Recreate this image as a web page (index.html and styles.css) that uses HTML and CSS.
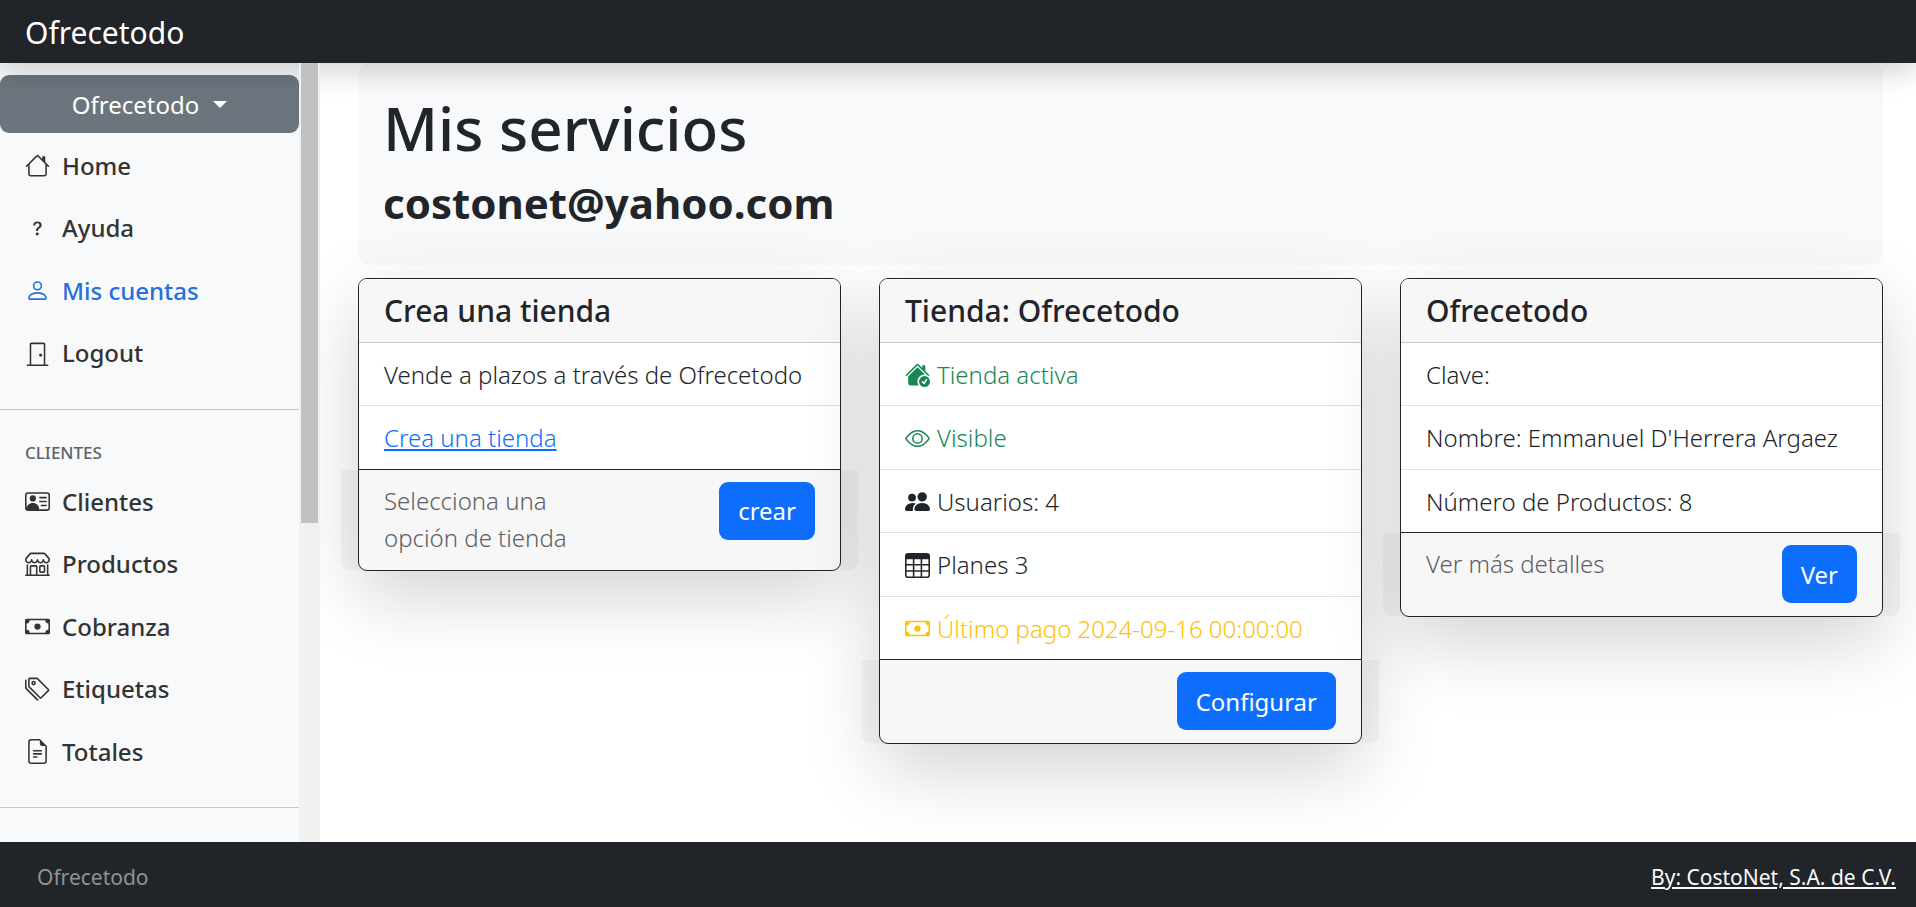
FILE: index.html
```html
<!DOCTYPE html>
<html lang="es">
<head>
    <meta charset="utf-8">
    <meta name="viewport" content="width=device-width, initial-scale=1">
    <title>Ofrecetodo</title>
    <link rel="stylesheet" href="styles.css">
</head>
<body>
    <header class="navbar">
        <a class="navbar-brand" href="#">Ofrecetodo</a>
    </header>

    <div class="layout">
        <aside class="sidebar">
            <nav class="sidebar-menu">
                <button class="btn btn-secondary dropdown-toggle" type="button">Ofrecetodo</button>
                <ul class="nav">
                    <li><a class="nav-link" href="#">
                        <svg class="icon" viewBox="0 0 16 16"><path d="M8.707 1.5a1 1 0 0 0-1.414 0L.646 8.146a.5.5 0 0 0 .708.708L2 8.207V13.5A1.5 1.5 0 0 0 3.5 15h9a1.5 1.5 0 0 0 1.5-1.5V8.207l.646.647a.5.5 0 0 0 .708-.708L13 5.793V2.5a.5.5 0 0 0-.5-.5h-1a.5.5 0 0 0-.5.5v1.293zM13 7.207V13.5a.5.5 0 0 1-.5.5h-9a.5.5 0 0 1-.5-.5V7.207l5-5z"/></svg>
                        Home</a></li>
                    <li><a class="nav-link" href="#">
                        <svg class="icon" viewBox="0 0 16 16"><path d="M5.255 5.786a.237.237 0 0 0 .241.247h.825c.138 0 .248-.113.266-.25.09-.656.54-1.134 1.342-1.134.686 0 1.314.343 1.314 1.168 0 .635-.374.927-.965 1.371-.673.489-1.206 1.06-1.168 1.987l.003.217a.25.25 0 0 0 .25.246h.811a.25.25 0 0 0 .25-.25v-.105c0-.718.273-.927 1.01-1.486.609-.463 1.244-.977 1.244-2.056 0-1.511-1.276-2.241-2.673-2.241-1.267 0-2.655.59-2.75 2.286m1.557 5.763c0 .533.425.927 1.01.927.609 0 1.028-.394 1.028-.927 0-.552-.42-.94-1.029-.94-.584 0-1.009.388-1.009.94"/></svg>
                        Ayuda</a></li>
                    <li><a class="nav-link active" href="#">
                        <svg class="icon" viewBox="0 0 16 16"><path d="M8 8a3 3 0 1 0 0-6 3 3 0 0 0 0 6m2-3a2 2 0 1 1-4 0 2 2 0 0 1 4 0m4 8c0 1-1 1-1 1H3s-1 0-1-1 1-4 6-4 6 3 6 4m-1-.004c-.001-.246-.154-.986-.832-1.664C11.516 10.68 10.289 10 8 10s-3.516.68-4.168 1.332c-.678.678-.83 1.418-.832 1.664z"/></svg>
                        Mis cuentas</a></li>
                    <li><a class="nav-link" href="#">
                        <svg class="icon" viewBox="0 0 16 16"><path d="M3 2a1 1 0 0 1 1-1h8a1 1 0 0 1 1 1v13h1.5a.5.5 0 0 1 0 1h-13a.5.5 0 0 1 0-1H3zm1 13h8V2H4z"/><path d="M9 9a1 1 0 1 0 2 0 1 1 0 0 0-2 0"/></svg>
                        Logout</a></li>
                </ul>
                <hr class="divider">
                <h6 class="sidebar-heading">Clientes</h6>
                <ul class="nav">
                    <li><a class="nav-link" href="#">
                        <svg class="icon" viewBox="0 0 16 16"><path d="M5 8a2 2 0 1 0 0-4 2 2 0 0 0 0 4m4-2.5a.5.5 0 0 1 .5-.5h4a.5.5 0 0 1 0 1h-4a.5.5 0 0 1-.5-.5M9 8a.5.5 0 0 1 .5-.5h4a.5.5 0 0 1 0 1h-4A.5.5 0 0 1 9 8m1 2.5a.5.5 0 0 1 .5-.5h3a.5.5 0 0 1 0 1h-3a.5.5 0 0 1-.5-.5"/><path d="M2 2a2 2 0 0 0-2 2v8a2 2 0 0 0 2 2h12a2 2 0 0 0 2-2V4a2 2 0 0 0-2-2zM1 4a1 1 0 0 1 1-1h12a1 1 0 0 1 1 1v8a1 1 0 0 1-1 1H8.96q.04-.245.04-.5C9 10.567 7.21 9 5 9c-2.086 0-3.8 1.398-3.984 3.181A1 1 0 0 1 1 12z"/></svg>
                        Clientes</a></li>
                    <li><a class="nav-link" href="#">
                        <svg class="icon" viewBox="0 0 16 16"><path d="M2.97 1.35A1 1 0 0 1 3.73 1h8.54a1 1 0 0 1 .76.35l2.609 3.044A1.5 1.5 0 0 1 16 5.37v.255a2.375 2.375 0 0 1-4.25 1.458A2.37 2.37 0 0 1 9.875 8 2.37 2.37 0 0 1 8 7.083 2.37 2.37 0 0 1 6.125 8a2.37 2.37 0 0 1-1.875-.917A2.375 2.375 0 0 1 0 5.625V5.37a1.5 1.5 0 0 1 .361-.976zm1.78 4.275a1.375 1.375 0 0 0 2.75 0 .5.5 0 0 1 1 0 1.375 1.375 0 0 0 2.75 0 .5.5 0 0 1 1 0 1.375 1.375 0 1 0 2.75 0V5.37a.5.5 0 0 0-.12-.325L12.27 2H3.73L1.12 5.045A.5.5 0 0 0 1 5.37v.255a1.375 1.375 0 0 0 2.75 0 .5.5 0 0 1 1 0M1.5 8.5A.5.5 0 0 1 2 9v6h1v-5a1 1 0 0 1 1-1h3a1 1 0 0 1 1 1v5h6V9a.5.5 0 0 1 1 0v6h.5a.5.5 0 0 1 0 1H.5a.5.5 0 0 1 0-1H1V9a.5.5 0 0 1 .5-.5M4 15h3v-5H4zm5-5a1 1 0 0 1 1-1h2a1 1 0 0 1 1 1v3a1 1 0 0 1-1 1h-2a1 1 0 0 1-1-1zm3 0h-2v3h2z"/></svg>
                        Productos</a></li>
                    <li><a class="nav-link" href="#">
                        <svg class="icon" viewBox="0 0 16 16"><path d="M8 10a2 2 0 1 0 0-4 2 2 0 0 0 0 4"/><path d="M0 4a1 1 0 0 1 1-1h14a1 1 0 0 1 1 1v8a1 1 0 0 1-1 1H1a1 1 0 0 1-1-1zm3 0a2 2 0 0 1-2 2v4a2 2 0 0 1 2 2h10a2 2 0 0 1 2-2V6a2 2 0 0 1-2-2z"/></svg>
                        Cobranza</a></li>
                    <li><a class="nav-link" href="#">
                        <svg class="icon" viewBox="0 0 16 16"><path d="M3 2v4.586l7 7L14.586 9l-7-7zM2 2a1 1 0 0 1 1-1h4.586a1 1 0 0 1 .707.293l7 7a1 1 0 0 1 0 1.414l-4.586 4.586a1 1 0 0 1-1.414 0l-7-7A1 1 0 0 1 2 6.586z"/><path d="M5.5 5a.5.5 0 1 1 0-1 .5.5 0 0 1 0 1m0 1a1.5 1.5 0 1 0 0-3 1.5 1.5 0 0 0 0 3M1 7.086a1 1 0 0 0 .293.707L8.75 15.25l-.043.043a1 1 0 0 1-1.414 0l-7-7A1 1 0 0 1 0 7.586V3a1 1 0 0 1 1-1z"/></svg>
                        Etiquetas</a></li>
                    <li><a class="nav-link" href="#">
                        <svg class="icon" viewBox="0 0 16 16"><path d="M5.5 7a.5.5 0 0 0 0 1h5a.5.5 0 0 0 0-1zM5 9.5a.5.5 0 0 1 .5-.5h5a.5.5 0 0 1 0 1h-5a.5.5 0 0 1-.5-.5m0 2a.5.5 0 0 1 .5-.5h2a.5.5 0 0 1 0 1h-2a.5.5 0 0 1-.5-.5"/><path d="M9.5 0H4a2 2 0 0 0-2 2v12a2 2 0 0 0 2 2h8a2 2 0 0 0 2-2V4.5zm0 1v2A1.5 1.5 0 0 0 11 4.5h2V14a1 1 0 0 1-1 1H4a1 1 0 0 1-1-1V2a1 1 0 0 1 1-1z"/></svg>
                        Totales</a></li>
                </ul>
                <hr class="divider">
            </nav>
            <div class="scrollbar"><div class="scrollbar-thumb"></div></div>
        </aside>

        <main class="content">
            <section class="jumbotron">
                <h1>Mis servicios</h1>
                <h2>costonet@yahoo.com</h2>
            </section>

            <div class="cards">
                <article class="card">
                    <h5 class="card-header">Crea una tienda</h5>
                    <ul class="list-group">
                        <li>Vende a plazos a través de Ofrecetodo</li>
                        <li><a href="#">Crea una tienda</a></li>
                    </ul>
                    <div class="card-footer">
                        <span class="text-muted">Selecciona una opción de tienda</span>
                        <button class="btn btn-primary" type="button">crear</button>
                    </div>
                </article>

                <article class="card">
                    <h5 class="card-header">Tienda: Ofrecetodo</h5>
                    <ul class="list-group">
                        <li class="text-success">
                            <svg class="icon" viewBox="0 0 16 16"><path d="M7.293 1.5a1 1 0 0 1 1.414 0L11 3.793V2.5a.5.5 0 0 1 .5-.5h1a.5.5 0 0 1 .5.5v3.293l2.354 2.353a.5.5 0 0 1-.708.708L8 2.207 1.354 8.854a.5.5 0 1 1-.708-.708z"/><path d="m8 3.293 4.712 4.712A4.5 4.5 0 0 0 8.758 15H3.5A1.5 1.5 0 0 1 2 13.5V9.293z"/><path d="M12.5 16a3.5 3.5 0 1 0 0-7 3.5 3.5 0 0 0 0 7m1.679-4.493-1.335 2.226a.75.75 0 0 1-1.174.144l-.774-.773a.5.5 0 0 1 .708-.707l.547.547 1.17-1.951a.5.5 0 1 1 .858.514"/></svg>
                            Tienda activa</li>
                        <li class="text-success">
                            <svg class="icon" viewBox="0 0 16 16"><path d="M16 8s-3-5.5-8-5.5S0 8 0 8s3 5.5 8 5.5S16 8 16 8M1.173 8a13 13 0 0 1 1.66-2.043C4.12 4.668 5.88 3.5 8 3.5s3.879 1.168 5.168 2.457A13 13 0 0 1 14.828 8q-.086.13-.195.288c-.335.48-.83 1.12-1.465 1.755C11.879 11.332 10.119 12.5 8 12.5s-3.879-1.168-5.168-2.457A13 13 0 0 1 1.172 8z"/><path d="M8 5.5a2.5 2.5 0 1 0 0 5 2.5 2.5 0 0 0 0-5M4.5 8a3.5 3.5 0 1 1 7 0 3.5 3.5 0 0 1-7 0"/></svg>
                            Visible</li>
                        <li>
                            <svg class="icon" viewBox="0 0 16 16"><path d="M7 14s-1 0-1-1 1-4 5-4 5 3 5 4-1 1-1 1zm4-6a3 3 0 1 0 0-6 3 3 0 0 0 0 6m-5.784 6A2.24 2.24 0 0 1 5 13c0-1.355.68-2.75 1.936-3.72A6.3 6.3 0 0 0 5 9c-4 0-5 3-5 4s1 1 1 1zM4.5 8a2.5 2.5 0 1 0 0-5 2.5 2.5 0 0 0 0 5"/></svg>
                            Usuarios: 4</li>
                        <li>
                            <svg class="icon" viewBox="0 0 16 16"><path d="M0 2a2 2 0 0 1 2-2h12a2 2 0 0 1 2 2v12a2 2 0 0 1-2 2H2a2 2 0 0 1-2-2zm15 2h-4v3h4zm0 4h-4v3h4zm0 4h-4v3h3a1 1 0 0 0 1-1zm-5 3v-3H6v3zm-5 0v-3H1v2a1 1 0 0 0 1 1zm-4-4h4V8H1zm0-4h4V4H1zm5-3v3h4V4zm4 4H6v3h4z"/></svg>
                            Planes 3</li>
                        <li class="text-warning">
                            <svg class="icon" viewBox="0 0 16 16"><path d="M8 10a2 2 0 1 0 0-4 2 2 0 0 0 0 4"/><path d="M0 4a1 1 0 0 1 1-1h14a1 1 0 0 1 1 1v8a1 1 0 0 1-1 1H1a1 1 0 0 1-1-1zm3 0a2 2 0 0 1-2 2v4a2 2 0 0 1 2 2h10a2 2 0 0 1 2-2V6a2 2 0 0 1-2-2z"/></svg>
                            Último pago 2024-09-16 00:00:00</li>
                    </ul>
                    <div class="card-footer">
                        <button class="btn btn-primary" type="button">Configurar</button>
                    </div>
                </article>

                <article class="card">
                    <h5 class="card-header">Ofrecetodo</h5>
                    <ul class="list-group">
                        <li>Clave:</li>
                        <li>Nombre: Emmanuel D'Herrera Argaez</li>
                        <li>Número de Productos: 8</li>
                    </ul>
                    <div class="card-footer">
                        <span class="text-muted">Ver más detalles</span>
                        <button class="btn btn-primary" type="button">Ver</button>
                    </div>
                </article>
            </div>
        </main>
    </div>

    <footer class="footer">
        <span class="footer-text">Ofrecetodo</span>
        <a class="footer-link" href="#">By: CostoNet, S.A. de C.V.</a>
    </footer>
</body>
</html>
```
FILE: styles.css
```css
* {
    box-sizing: border-box;
}
body {
    display: flex;
    flex-direction: column;
    height: 100vh;
    margin: 0;
    font-family: "Noto Sans", "Open Sans", sans-serif;
    font-size: 24px;
    line-height: 1.56;
    color: #212529;
    background-color: #fff;
    overflow: hidden;
}
h1, h2, h5, h6, ul {
    margin: 0;
    padding: 0;
}
ul {
    list-style: none;
}
.icon {
    flex: none;
    width: 25px;
    height: 25px;
    fill: currentColor;
}

/* top bar */
.navbar {
    position: relative;
    z-index: 2;
    flex: none;
    display: flex;
    align-items: center;
    height: 63px;
    padding: 0 25px;
    background-color: #212529;
    box-shadow: 0 12px 25px rgba(0, 0, 0, 0.15);
}
.navbar-brand {
    padding-top: 3px;
    font-size: 30px;
    color: #fff;
    text-decoration: none;
}

.layout {
    flex: 1;
    display: flex;
    min-height: 0;
}

/* sidebar */
.sidebar {
    flex: none;
    display: flex;
    width: 320px;
    background-color: #f8f9fa;
}
.sidebar-menu {
    flex: 1;
    padding-top: 12px;
    overflow: hidden;
}
.scrollbar {
    position: relative;
    z-index: 3;
    width: 21px;
    padding: 0 2px;
    background-color: #f1f1f1;
}
.scrollbar-thumb {
    height: 59%;
    background-color: #c1c1c1;
}
.nav {
    padding-top: 2px;
}
.nav-link {
    display: flex;
    align-items: center;
    gap: 12px;
    padding: 12px 25px 13px;
    font-weight: 500;
    color: #333;
    text-decoration: none;
}
.nav-link.active {
    color: #2470dc;
}
.divider {
    height: 1px;
    margin: 24px 0;
    border: 0;
    background-color: #c4c6c8;
}
.sidebar-heading {
    padding: 7px 25px 4px;
    font-size: 17px;
    font-weight: 500;
    line-height: 24px;
    color: #5c636a;
    text-transform: uppercase;
}

/* buttons */
.btn {
    flex: none;
    height: 58px;
    padding: 0 19px;
    font-family: inherit;
    font-size: 24px;
    color: #fff;
    border: 0;
    border-radius: 9px;
    cursor: pointer;
}
.btn-primary {
    background-color: #0d6efd;
}
.btn-secondary {
    background-color: #6c757d;
}
.dropdown-toggle {
    display: flex;
    align-items: center;
    justify-content: center;
    gap: 14px;
    width: 100%;
}
.dropdown-toggle::after {
    content: "";
    border-top: 7px solid;
    border-left: 7px solid transparent;
    border-right: 7px solid transparent;
}

/* content */
.content {
    flex: 1;
    min-width: 0;
    padding: 0 33px 0 38px;
    overflow: hidden;
}
.jumbotron {
    padding: 28px 25px 31px;
    margin-bottom: 13px;
    background-color: #f8f9fa;
    border-radius: 12px;
}
.jumbotron h1 {
    margin-bottom: 5px;
    font-size: 60px;
    font-weight: 500;
    line-height: 75px;
}
.jumbotron h2 {
    font-size: 42px;
    font-weight: 700;
    line-height: 63px;
}
.cards {
    display: grid;
    grid-template-columns: repeat(3, 1fr);
    align-items: start;
    gap: 38px;
}
.card {
    background-color: #fff;
    border: 1px solid #212529;
    border-radius: 9px;
    box-shadow: 0 25px 75px rgba(0, 0, 0, 0.175);
}
.card-header {
    padding: 13px 25px 12px;
    font-size: 30px;
    font-weight: 500;
    line-height: 38px;
    background-color: #f7f7f7;
    border-bottom: 1px solid #c8c9ca;
    border-radius: 8px 8px 0 0;
}
.list-group {
    font-weight: 350;
}
.list-group li {
    display: flex;
    align-items: center;
    gap: 7px;
    padding: 13px 25px 12px;
    border-bottom: 1px solid #dee2e6;
}
.list-group li:last-child {
    border-bottom-color: #212529;
}
.list-group a {
    color: #0d6efd;
}
.card-footer {
    display: flex;
    align-items: flex-start;
    justify-content: flex-end;
    padding: 12px 43px 13px;
    margin: 0 -18px;
    font-weight: 350;
    background-color: rgba(0, 0, 0, 0.03);
    border-radius: 0 0 8px 8px;
}
.card-footer .text-muted {
    width: 50%;
    margin-right: auto;
}
.text-muted {
    color: #5c6065;
}
.text-success {
    color: #198754;
}
.text-warning {
    color: #ffc107;
}

/* footer */
.footer {
    position: relative;
    z-index: 4;
    flex: none;
    display: flex;
    align-items: center;
    justify-content: space-between;
    height: 65px;
    padding: 5px 20px 0 37px;
    font-size: 21px;
    background-color: #212529;
}
.footer-text {
    color: #8f9294;
}
.footer-link {
    color: #f8f9fa;
}
```
